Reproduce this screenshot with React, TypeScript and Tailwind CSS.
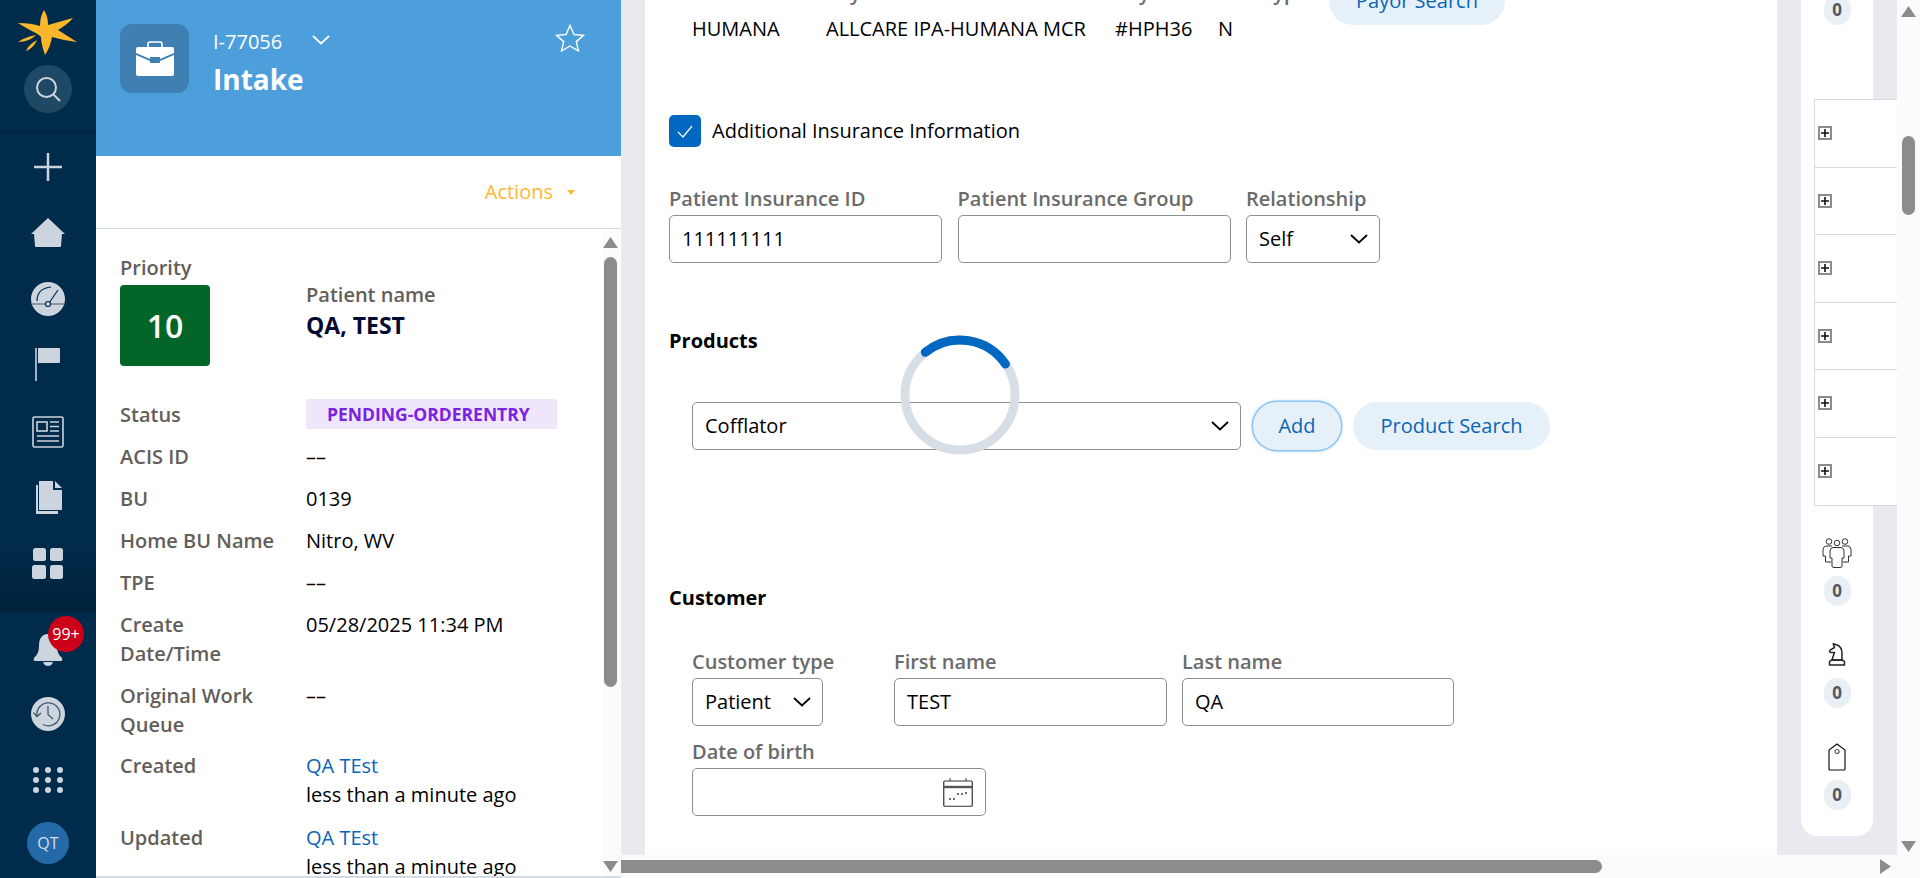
import React from 'react';
import { TbChessKnight } from 'react-icons/tb';

const FONT = "font-['Open_Sans',sans-serif]";
const ICON = '#ccd4dd';
const NAVY = '#012b4b';

const Logo = () => (
  <svg width="62" height="48" viewBox="0 0 62 48" className="block">
    <path
      fill="#fbb62c"
      d="M27 0 C30 5 31 9 31 15 L56 8 C52 13 46 17 41 20 L60 32 C51 31 43 29 35 27 C34 33 32 39 28 45 C26 39 24 33 24 27 C22 24 12 20 1 13 C10 13 17 14 23 16 C23 10 24 5 27 0 Z"
    />
    <path fill="#fbb62c" d="M1 32 C7 28 13 26 19 25 C15 29 9 32 1 32 Z M9 41 C11 36 15 33 20 30 C18 35 14 39 9 41 Z" />
  </svg>
);

const Search = () => (
  <svg width="28" height="28" viewBox="0 0 28 28" fill="none" stroke={ICON} strokeWidth="2">
    <circle cx="12.5" cy="12.5" r="9.5" />
    <path d="M19.5 19.5 L26 26" />
  </svg>
);

const Plus = () => (
  <svg width="30" height="30" viewBox="0 0 30 30" fill="none" stroke={ICON} strokeWidth="2.5">
    <path d="M15 1 V29 M1 15 H29" />
  </svg>
);

const Home = () => (
  <svg width="34" height="30" viewBox="0 0 34 30" fill={ICON}>
    <path d="M17 0 L34 16 L31 16 L30 28 Q30 29 29 29 H5 Q4 29 4 28 L3 16 L0 16 Z" />
  </svg>
);

const Gauge = () => (
  <svg width="34" height="34" viewBox="0 0 34 34">
    <circle cx="17" cy="17" r="17" fill={ICON} />
    <path d="M0.5 22 H33.5" stroke="#6f8297" strokeWidth="1.5" />
    <path d="M6 19 C6 11 11 6 20 5 M18 21 L27 8" stroke={NAVY} strokeWidth="1.2" fill="none" />
    <circle cx="17" cy="22" r="2.5" fill={ICON} stroke={NAVY} strokeWidth="1.2" />
  </svg>
);

const Flag = () => (
  <svg width="26" height="34" viewBox="0 0 26 34">
    <rect x="0" y="0" width="2" height="33" fill="#9fb0c0" />
    <path d="M3 0 H24 Q25 0 25 1 V14 Q25 15 24 15 H3 Z" fill={ICON} />
  </svg>
);

const News = () => (
  <svg width="32" height="32" viewBox="0 0 32 32" fill="none" stroke={ICON} strokeWidth="1.6">
    <rect x="1" y="1" width="30" height="30" rx="1.5" />
    <rect x="5" y="6" width="10" height="9" />
    <path d="M18 6 H27 M18 10.5 H27 M18 15 H27 M5 20 H27 M5 25 H27" />
  </svg>
);

const Docs = () => (
  <svg width="30" height="34" viewBox="0 0 30 34">
    <path d="M3 4 V33 H25 V30 H5 V4 Z" fill={ICON} />
    <path d="M6 0 H20 V9 H29 V29 H6 Z" fill={ICON} />
    <path d="M22 0 L29 7 H22 Z" fill={ICON} />
  </svg>
);

const Grid = () => (
  <svg width="32" height="32" viewBox="0 0 32 32" fill={ICON}>
    <rect x="1" y="0" width="13" height="13" rx="2.5" />
    <rect x="18" y="0" width="13" height="13" rx="2.5" />
    <rect x="0" y="17" width="14" height="14" rx="2.5" />
    <rect x="18" y="17" width="13" height="14" rx="2.5" />
  </svg>
);

const Bell = () => (
  <svg width="30" height="34" viewBox="0 0 30 34" fill={ICON}>
    <path d="M15 2 C8 2 6 8 6 14 C6 20 4 23 1 26 Q0 29 2 29 H28 Q30 29 29 26 C26 23 24 20 24 14 C24 8 22 2 15 2 Z" />
    <path d="M10 30 H20 C19 33 17 34 15 34 C13 34 11 33 10 30 Z" />
  </svg>
);

const History = () => (
  <svg width="34" height="34" viewBox="0 0 34 34">
    <circle cx="17" cy="17" r="17" fill={ICON} />
    <path d="M6 19 A11.5 11.5 0 1 1 12 27.5 M2.5 15.5 L6 19.5 L10 16 M17 9 V17.5 L22 22" fill="none" stroke="#44596e" strokeWidth="1.3" />
  </svg>
);

const Dots = () => (
  <div className="grid grid-cols-3 gap-x-[6.5px] gap-y-[4.5px]">
    {Array.from({ length: 9 }).map((_, i) => (
      <span key={i} className="block h-[5.5px] w-[5.5px] rounded-full bg-[#ccd4dd]" />
    ))}
  </div>
);

const Briefcase = () => (
  <svg width="40" height="36" viewBox="0 0 40 36">
    <path d="M13 7 V3 Q13 1 15 1 H25 Q27 1 27 3 V7" fill="none" stroke="#fff" strokeWidth="1.6" />
    <path d="M1 8 Q1 6 3 6 H37 Q39 6 39 8 V12 L25 18 V16 H15 V18 L1 12 Z" fill="#fff" />
    <path d="M1 14 L15 20 V21 Q15 22 16 22 H24 Q25 22 25 21 V20 L39 14 V33 Q39 35 37 35 H3 Q1 35 1 33 Z" fill="#fff" />
    <path d="M16 17 H24 V21 H16 Z" fill="#407fb1" />
  </svg>
);

const Chevron = ({ className, color = '#000' }: { className?: string; color?: string }) => (
  <svg width="18" height="10" viewBox="0 0 18 10" fill="none" stroke={color} strokeWidth="1.8" className={className}>
    <path d="M1 1 L9 8.5 L17 1" />
  </svg>
);

const Star = () => (
  <svg width="30" height="28" viewBox="0 0 30 28" fill="none" stroke="#fff" strokeWidth="1.4">
    <path d="M15 1.5 L19 10.5 L28.5 11.3 L21.3 17.6 L23.5 27 L15 22 L6.5 27 L8.7 17.6 L1.5 11.3 L11 10.5 Z" />
  </svg>
);

const Calendar = () => (
  <svg width="30" height="29" viewBox="0 0 30 29" fill="none" stroke="#333">
    <rect x="0.75" y="3" width="28.5" height="25.25" rx="1" strokeWidth="1.2" />
    <path d="M1 9 H29" strokeWidth="2.4" stroke="#555" />
    <path d="M7 0 V3 M23 0 V3" strokeWidth="1" />
    <path d="M7 20 V22 M11 20 V22 M15 15 V17 M19 15 V17 M23 14 V16" strokeWidth="1.4" />
  </svg>
);

const People = () => (
  <svg width="30" height="30" viewBox="0 0 30 30" fill="none" stroke="#333" strokeWidth="1">
    <circle cx="7" cy="3.5" r="2.8" />
    <circle cx="15" cy="5" r="2.8" />
    <circle cx="23" cy="3.5" r="2.8" />
    <path d="M10 8 H4 Q1 8.5 1 12 V18 H3.5 V24 H9.5" />
    <path d="M20 8 H26 Q29 8.5 29 12 V18 H26.5 V24 H20.5" />
    <path d="M11 9.5 H19 Q22 10 22 13 V20 H20 V28 Q20 29.5 18 29.5 H12 Q10 29.5 10 28 V20 H8 V13 Q8 10 11 9.5 Z" />
  </svg>
);

const Tag = () => (
  <svg width="18" height="28" viewBox="0 0 18 28" fill="none" stroke="#111" strokeWidth="1.2">
    <path d="M9 1 L17 7 V26 Q17 27 16 27 H2 Q1 27 1 26 V7 Z" />
    <circle cx="9" cy="8.5" r="2" stroke="#555" />
  </svg>
);

const Arrow = ({ dir }: { dir: 'up' | 'down' | 'right' }) => {
  const d = dir === 'up' ? 'M7.5 0 L15 11 H0 Z' : dir === 'down' ? 'M0 0 H15 L7.5 11 Z' : 'M0 0 L11 7.5 L0 15 Z';
  return (
    <svg width={dir === 'right' ? 11 : 15} height={dir === 'right' ? 15 : 11} className="block">
      <path d={d} fill="#8c8c8c" />
    </svg>
  );
};

const SideItem = ({ h, children }: { h: number; children: React.ReactNode }) => (
  <div className="flex w-full items-center justify-center" style={{ height: h }}>
    {children}
  </div>
);

const Sidebar = () => (
  <div className="flex h-full w-24 shrink-0 flex-col bg-[#012b4b]">
    <div className="flex h-[133px] flex-col items-center border-b border-[#00213a] pt-[10px]">
      <Logo />
      <div className="mt-[7px] flex h-12 w-12 items-center justify-center rounded-full bg-[#1f4864]">
        <Search />
      </div>
    </div>
    <div className="flex h-[480px] flex-col items-center bg-gradient-to-b from-[#012b4b] from-[85%] to-[#01233e] pt-[1px]">
      <SideItem h={66}><Plus /></SideItem>
      <SideItem h={66}><Home /></SideItem>
      <SideItem h={66}><Gauge /></SideItem>
      <SideItem h={66}><Flag /></SideItem>
      <SideItem h={68}><News /></SideItem>
      <SideItem h={64}><Docs /></SideItem>
      <SideItem h={68}><Grid /></SideItem>
    </div>
    <div className="flex flex-1 flex-col items-center">
      <div className="relative flex h-[68px] w-full items-center justify-center pt-[4px]">
        <Bell />
        <span className="absolute left-[48px] top-[3px] flex h-9 w-9 items-center justify-center rounded-full bg-[#cc0018] text-[16px] text-white">
          99+
        </span>
      </div>
      <SideItem h={66}><History /></SideItem>
      <SideItem h={66}><Dots /></SideItem>
      <div className="mt-[9px] flex h-[42px] w-[42px] items-center justify-center rounded-full bg-[#2469a8] text-[16px] text-[#d5dfe8]">
        QT
      </div>
    </div>
  </div>
);

const Row = ({ label, children, h = 42 }: { label: React.ReactNode; children?: React.ReactNode; h?: number }) => (
  <div className="flex leading-[29px]" style={{ minHeight: h }}>
    <div className="w-[186px] shrink-0 font-semibold text-[#635e5a]">{label}</div>
    <div className="text-black">{children}</div>
  </div>
);

const LeftPanel = () => (
  <div className="flex h-full w-[525px] shrink-0 flex-col bg-white">
    <div className="flex h-[156px] shrink-0 items-start bg-[#4d9fdc] pl-6 pr-[36px] pt-6">
      <div className="flex h-[69px] w-[69px] items-center justify-center rounded-xl bg-[#407fb1]">
        <Briefcase />
      </div>
      <div className="ml-6 flex-1 text-white">
        <div className="flex items-center text-[20px] leading-[36px]">
          I-77056
          <Chevron color="#fff" className="ml-[27px] mb-[4px] w-[24px]" />
        </div>
        <div className="text-[28px] font-bold leading-[38px]">Intake</div>
      </div>
      <div className="pt-[0px]"><Star /></div>
    </div>
    <div className="flex h-[73px] shrink-0 items-center justify-end border-b-[1.5px] border-[#d5dbe3] pr-[46px] text-[20px] text-[#fdb731]">
      Actions
      <span className="ml-[14px] h-0 w-0 border-x-[4px] border-t-[5px] border-x-transparent border-t-[#fdb731]" />
    </div>
    <div className="flex min-h-0 flex-1 border-b-2 border-[#d5dbe3]">
      <div className="flex-1 overflow-hidden pl-6 pt-[24px] text-[20px]">
        <div className="flex h-[147px]">
          <div className="w-[186px] shrink-0">
            <div className="font-semibold leading-[29px] text-[#635e5a]">Priority</div>
            <div className="mt-[3px] flex h-[81px] w-[90px] items-center justify-center rounded bg-[#036628] text-[32px] font-semibold text-white">
              10
            </div>
          </div>
          <div className="pt-[26px] leading-[31px]">
            <div className="font-semibold text-[#635e5a]">Patient name</div>
            <div className="text-[23px] font-bold text-[#050a30]">QA, TEST</div>
          </div>
        </div>
        <Row label="Status">
          <span className="mt-[-1px] flex h-[30px] w-[251px] items-center bg-[#f0e6fb] pl-[21px] text-[17.5px] font-bold text-[#7a22e0]">
            PENDING-ORDERENTRY
          </span>
        </Row>
        <Row label="ACIS ID">––</Row>
        <Row label="BU">0139</Row>
        <Row label="Home BU Name">Nitro, WV</Row>
        <Row label="TPE">––</Row>
        <Row label={<>Create<br />Date/Time</>} h={71}>05/28/2025 11:34 PM</Row>
        <Row label={<>Original Work<br />Queue</>} h={70}>––</Row>
        <Row label="Created" h={72}>
          <span className="text-[#0a66b5]">QA TEst</span><br />less than a minute ago
        </Row>
        <Row label="Updated">
          <span className="text-[#0a66b5]">QA TEst</span><br />less than a minute ago
        </Row>
      </div>
      <div className="flex w-[18px] shrink-0 flex-col items-start bg-[#fbfbfb] pt-[8px]">
        <Arrow dir="up" />
        <div className="ml-[1px] mt-[9px] h-[430px] w-[13px] rounded-full bg-[#8c8c8c]" />
        <div className="mt-auto pb-[4px]"><Arrow dir="down" /></div>
      </div>
    </div>
  </div>
);

const Label = ({ children }: { children: React.ReactNode }) => (
  <div className="text-[20px] font-semibold leading-[29px] text-[#6b6b6b]">{children}</div>
);

const Box = ({ w, children }: { w: number; children?: React.ReactNode }) => (
  <div
    className="flex h-12 items-center justify-between rounded-[5px] border border-[#8f8f8f] bg-white px-3 text-[20px] text-black"
    style={{ width: w }}
  >
    {children}
  </div>
);

const Field = ({ label, w, children }: { label: string; w: number; children?: React.ReactNode }) => (
  <div>
    <Label>{label}</Label>
    <div className="mt-[2px]"><Box w={w}>{children}</Box></div>
  </div>
);

const PillButton = ({ children, w, className = '' }: { children: React.ReactNode; w: number; className?: string }) => (
  <div
    className={`flex h-12 items-center justify-center rounded-full bg-[#e6f0f9] text-[20px] text-[#0a66b5] ${className}`}
    style={{ width: w }}
  >
    {children}
  </div>
);

const Spinner = () => (
  <svg width="120" height="120" viewBox="0 0 120 120" className="absolute left-[255px] top-[335px]" fill="none" strokeWidth="9">
    <circle cx="60" cy="60" r="55" stroke="#d8dee6" />
    <path d="M 25.4 17.3 A 55 55 0 0 1 105.4 29" stroke="#0068c0" strokeLinecap="round" />
  </svg>
);

const Form = () => (
  <div className="relative h-full w-[1132px] shrink-0 overflow-hidden bg-white pl-6">
    <div className="relative -mt-[22px] ml-[23px] flex">
      <div className="w-[134px]">
        <Label>Health Plan</Label>
        <div className="mt-[7px] text-[20px] leading-[29px] text-black">HUMANA</div>
      </div>
      <div className="w-[289px]">
        <Label>Payor Name</Label>
        <div className="mt-[7px] text-[20px] leading-[29px] text-black">ALLCARE IPA-HUMANA MCR</div>
      </div>
      <div className="w-[103px]">
        <Label>Payor ID</Label>
        <div className="mt-[7px] text-[20px] leading-[29px] text-black">#HPH36</div>
      </div>
      <div className="w-[111px]">
        <Label>Plan type</Label>
        <div className="mt-[7px] text-[20px] leading-[29px] text-black">N</div>
      </div>
      <PillButton w={176} className="-mt-[1px]">Payor Search</PillButton>
    </div>

    <div className="mt-[72px] flex items-center">
      <div className="flex h-8 w-8 items-center justify-center rounded-[5px] bg-[#0068c0]">
        <svg width="16" height="13" viewBox="0 0 16 13" fill="none" stroke="#fff" strokeWidth="1.2">
          <path d="M1 7 L6 12 L15 1" />
        </svg>
      </div>
      <span className="ml-[11px] text-[20px] text-black">Additional Insurance Information</span>
    </div>

    <div className="mt-[37px] flex gap-[15.5px]">
      <Field label="Patient Insurance ID" w={273}>111111111</Field>
      <Field label="Patient Insurance Group" w={273} />
      <Field label="Relationship" w={134}>
        Self
        <Chevron className="-mr-[1px]" />
      </Field>
    </div>

    <div className="mt-[63px] text-[20px] font-bold leading-[29px] text-black">Products</div>

    <div className="ml-[23px] mt-[47px] flex items-center gap-3">
      <Box w={549}>
        Cofflator
        <Chevron className="-mr-[1px]" />
      </Box>
      <PillButton w={88} className="shadow-[0_0_0_1.5px_#8cc4f2,0_0_4px_#8cc4f2]">Add</PillButton>
      <PillButton w={197}>Product Search</PillButton>
    </div>

    <div className="mt-[133px] text-[20px] font-bold leading-[29px] text-black">Customer</div>

    <div className="ml-[23px] mt-[35px] flex">
      <div className="w-[202px]">
        <Field label="Customer type" w={131}>
          Patient
          <Chevron className="-mr-[1px]" />
        </Field>
      </div>
      <div className="flex gap-[15px]">
        <Field label="First name" w={273}>TEST</Field>
        <Field label="Last name" w={272}>QA</Field>
      </div>
    </div>

    <div className="ml-[23px] mt-[11px]">
      <Field label="Date of birth" w={294}>
        <span />
        <Calendar />
      </Field>
    </div>

    <Spinner />
  </div>
);

const Count = () => (
  <div className="flex h-[30px] w-[27px] items-center justify-center rounded-full bg-[#e8eff5] text-[17px] font-bold text-[#55595e]">
    0
  </div>
);

const RailItem = ({ icon }: { icon: React.ReactNode }) => (
  <div className="flex h-[102px] flex-col items-center">
    <div className="flex h-[34px] items-center justify-center">{icon}</div>
    <div className="mt-[6px]"><Count /></div>
  </div>
);

const Rail = () => (
  <div className="h-[836px] w-[72px] shrink-0 rounded-b-2xl bg-white">
    <div className="-mt-[5px] flex flex-col items-center"><Count /></div>
    <div className="ml-[13px] mt-[74px] w-[83px] border-l-[1.5px] border-t-[1.5px] border-b-[1.5px] border-[#d5dbe3] bg-white">
      {[0, 1, 2, 3, 4, 5].map((i) => (
        <div key={i} className={`flex h-[67.5px] items-center pl-[3px] ${i < 5 ? 'border-b-[1.5px] border-[#d5dbe3]' : ''}`}>
          <div className="flex h-[14px] w-[14px] items-center justify-center border-2 border-[#8c8c8c] bg-white text-black">
            <svg width="8" height="8" viewBox="0 0 8 8" stroke="#111" strokeWidth="1.6"><path d="M4 0 V8 M0 4 H8" /></svg>
          </div>
        </div>
      ))}
    </div>
    <div className="mt-[30px]">
      <RailItem icon={<People />} />
      <RailItem icon={<TbChessKnight size={30} color="#222" strokeWidth={1.2} />} />
      <RailItem icon={<Tag />} />
    </div>
  </div>
);

export default function App() {
  return (
    <div className={`flex h-[878px] w-[1920px] overflow-hidden bg-white ${FONT}`}>
      <Sidebar />
      <LeftPanel />
      <div className="flex min-w-0 flex-1 flex-col">
        <div className="flex h-[855px] shrink-0">
          <div className="flex flex-1 gap-6 bg-[#e8eaf0] px-6">
            <Form />
            <Rail />
          </div>
          <div className="flex w-[23px] shrink-0 flex-col items-center bg-[#fbfbfb] pt-[6px]">
            <Arrow dir="up" />
            <div className="mt-[119px] h-[79px] w-[13px] rounded-full bg-[#8c8c8c]" />
            <div className="mt-auto pb-[3px]"><Arrow dir="down" /></div>
          </div>
        </div>
        <div className="flex flex-1 items-center bg-[#fbfbfb]">
          <div className="h-[13px] w-[981px] rounded-r-full bg-[#8c8c8c]" />
          <div className="ml-auto pr-[29px]"><Arrow dir="right" /></div>
        </div>
      </div>
    </div>
  );
}
